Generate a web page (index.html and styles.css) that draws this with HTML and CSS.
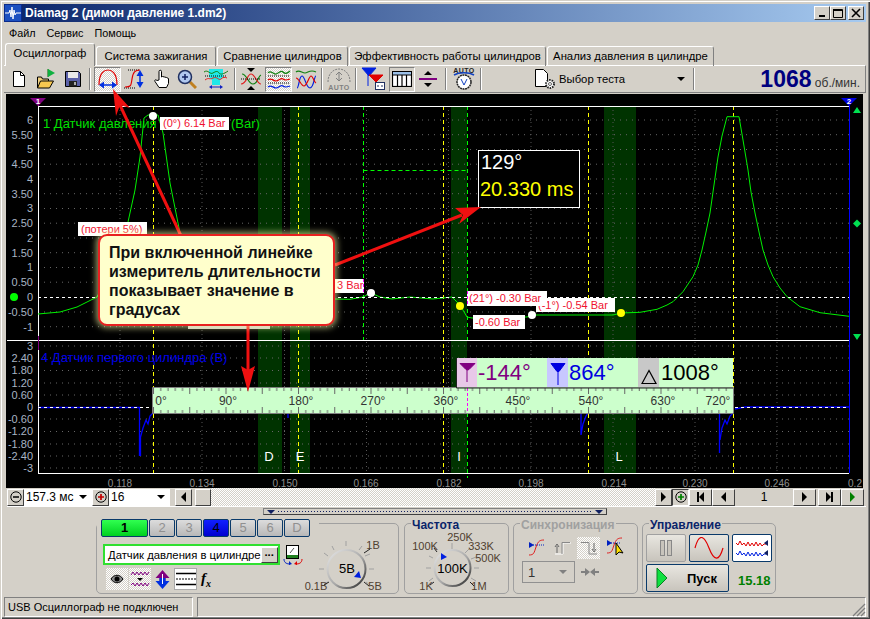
FILE: index.html
```html
<!DOCTYPE html>
<html lang="en">
<head>
    <meta charset="UTF-8">
    <meta name="viewport" content="width=device-width, initial-scale=1.0">
    <title>Diamag 2</title>
    <link rel="stylesheet" href="styles.css">
</head>
<body>
<div class="window">
    <div class="titlebar">
        <svg class="app-icon" width="18" height="18" viewBox="0 0 18 18"><rect width="18" height="18" fill="#0a2a8a"/><rect x="1" y="1" width="16" height="16" fill="#1c50c0"/><path d="M1 9h4l1-3 1 7 1-10 1 12 1-9 1 5 1-2h5" fill="none" stroke="#fff"/></svg>
        <span class="title-text">Diamag 2 (димон давление 1.dm2)</span>
        <div class="win-buttons">
            <div class="win-btn"><svg width="10" height="10"><rect x="2" y="7" width="6" height="2"/></svg></div>
            <div class="win-btn"><svg width="10" height="10"><path d="M0.5 1.500h9v8h-9zM0.5 1v1.500h9" fill="none" stroke="#000"/></svg></div>
            <div class="win-btn win-close"><svg width="10" height="10"><path d="M1 1l8 8M9 1l-8 8" stroke="#000" stroke-width="1.600"/></svg></div>
        </div>
    </div>

    <div class="menu">
        <span>Файл</span>
        <span>Сервис</span>
        <span>Помощь</span>
    </div>

    <div class="tabs">
        <div class="tab tab-active">Осциллограф</div>
        <div class="tab tab-w120">Система зажигания</div>
        <div class="tab tab-w131">Сравнение цилиндров</div>
        <div class="tab tab-w197">Эффективность работы цилиндров</div>
        <div class="tab tab-w167">Анализ давления в цилиндре</div>
    </div>

    <div class="toolbar">
        <div class="tool"><svg width="16" height="18" viewBox="0 0 16 18"><path d="M2.500 1.500h7l4 4v11h-11z" fill="#fff" stroke="#000"/><path d="M9.500 1.500v4h4" fill="none" stroke="#000"/></svg></div>
        <div class="tool"><svg width="20" height="22" viewBox="0 0 20 22"><path d="M12 1v8" stroke="#060"/><path d="M12 1l7 4-7 4z" fill="#10b040"/><path d="M1.500 20V9h4l1 2h6v2" fill="#f0d080" stroke="#000"/><path d="M1.500 20l3-7h13l-4 7z" fill="#f8c850" stroke="#000"/></svg></div>
        <div class="tool"><svg width="16" height="16" viewBox="0 0 16 16"><path d="M.5 .5h13l2 2v13H.5z" fill="#5a60a8" stroke="#000"/><rect x="3" y="1" width="10" height="6" fill="#e8e8e8"/><rect x="4" y="10" width="8" height="5.500" fill="#222"/><rect x="9" y="11" width="2" height="3" fill="#aaa"/></svg></div>
        <div class="sep"></div>
        <div class="tool tool-on"><svg width="22" height="22" viewBox="0 0 22 22"><path d="M2 17C2 4 8 2 11 2s9 2 9 15" fill="none" stroke="#e00000" stroke-width="1.200"/><path d="M3 17h16" stroke="#0030e0" stroke-width="1.500"/><path d="M2 17l5-3.500v7zM20 17l-5-3.500v7z" fill="#0030e0"/></svg></div>
        <div class="tool"><svg width="22" height="22" viewBox="0 0 22 22"><path d="M4 2h12M0 20h11" stroke="#000" stroke-dasharray="1 1"/><path d="M1 19c6 0 6-1 7-8s3-9 8-9" fill="none" stroke="#e00000" stroke-width="1.200"/><path d="M16 5v12" stroke="#0030e0" stroke-width="1.500"/><path d="M16 2l3.500 6h-7zM16 20l3.500-6h-7z" fill="#0030e0"/></svg></div>
        <div class="tool"><svg width="18" height="20" viewBox="0 0 18 20"><path d="M6 11V2.500a1.200 1.200 0 0 1 2.500 0V8l1-.5 2 .5 2 .5 2 1v5l-2 4H6l-4-6c-1-2 1-2 2-1z" fill="#fff" stroke="#000"/></svg></div>
        <div class="tool tool-w24"><svg width="20" height="20" viewBox="0 0 20 20"><path d="M13 13l6 6" stroke="#c08020" stroke-width="3"/><circle cx="8" cy="8" r="6.500" fill="#b0c8f0" stroke="#203060" stroke-width="1.500"/><path d="M5 8h6M8 5v6" stroke="#102060" stroke-width="1.500"/></svg></div>
        <div class="tool tool-w34"><svg width="26" height="22" viewBox="0 0 26 22"><path d="M6 1h14v8l-3 3v5H9v-5l-3-3z" fill="#20e8e8"/><path d="M1 4c4-3 6 3 9 1s5-2 6 0 5 1 9-2" fill="none" stroke="#108010"/><path d="M2 8h22" stroke="#000" stroke-dasharray="1 1"/><path d="M2 12c4-3 4 0 8-2s6 3 8 1 4-2 6-1" fill="none" stroke="#e02020"/><path d="M8 19h10" stroke="#1020c0"/><path d="M6 19l3-2v4zM20 19l-3-2v4z" fill="#1020c0"/></svg></div>
        <div class="sep sep-tight"></div>
        <div class="tool tool-w28"><svg width="24" height="24" viewBox="0 0 24 24"><path d="M3 7c5 0 6 10 11 10s5-8 8-9" fill="none" stroke="#108010" stroke-width="1.200"/><path d="M2 17c6 0 6-10 10-10s6 10 10 10" fill="none" stroke="#e02020" stroke-width="1.200"/><path d="M2 12h20" stroke="#000" stroke-dasharray="1 1"/><path d="M8 1h8l-4 4zM8 23h8l-4-4z"/></svg></div>
        <div class="tool tool-on"><svg width="24" height="22" viewBox="0 0 24 22"><path d="M1 5c3-4 5 2 8 1s5-4 7-2 4 2 7-1" fill="none" stroke="#108010" stroke-width="1.200"/><path d="M1 8h22M1 15h22" stroke="#000" stroke-dasharray="1 1"/><path d="M1 12c3-3 5 1 8 1s5-4 7-2 4 1 7 0" fill="none" stroke="#e00000" stroke-width="1.200"/><path d="M1 19c3-3 5 1 8 1s5-4 7-2 4 1 7 0" fill="none" stroke="#0020e0" stroke-width="1.200"/></svg></div>
        <div class="tool tool-w28"><svg width="22" height="22" viewBox="0 0 22 22"><path d="M1 4c3-3 6 1 9 1s5-4 11-1" fill="none" stroke="#108010" stroke-width="1.200"/><path d="M2 20c2 0 2-12 5-12s4 12 8 12 4-12 6-12" fill="none" stroke="#0020e0" stroke-width="1.200"/><path d="M1 10c3 0 5 8 8 8s5-10 7-10 3 6 5 7" fill="none" stroke="#e00000" stroke-width="1.200"/></svg></div>
        <div class="sep sep-a"></div>
        <div class="tool"><svg width="24" height="24" viewBox="0 0 24 24"><path d="M1 15C1 6 7 2 12 2s11 4 11 13" fill="none" stroke="#808080" stroke-dasharray="2 1"/><path d="M12 5v9M9 8l3-3 3 3M9 11l3 3 3-3" fill="none" stroke="#808080"/><text x="12" y="23" class="auto-text auto-gray">AUTO</text></svg></div>
        <div class="sep"></div>
        <div class="tool tool-filter"><svg width="24" height="24" viewBox="0 0 24 24"><path d="M1 1h14l-7 8zM7 4v15" fill="#0020e0" stroke="#0020e0"/><path d="M8 8h14l-7 7zM15 12v8" fill="#e00000" stroke="#e00000"/><rect x="14.500" y="15.500" width="9" height="7" fill="#fff" stroke="#203060"/><path d="M16 19h2M20 19h2" stroke="#203060"/></svg></div>
        <div class="tool tool-w26 tool-pressed"><svg width="20" height="16" viewBox="0 0 20 16"><rect x=".5" y=".5" width="19" height="15" fill="#fff" stroke="#000" stroke-width="1.200"/><rect x="1" y="1" width="18" height="3" fill="#9cc0e8"/><path d="M0 4h20M5.500 4v12M10 4v12M14.500 4v12" stroke="#000" stroke-width="1.200"/></svg></div>
        <div class="tool tool-w25"><svg width="18" height="20" viewBox="0 0 18 20"><path d="M0 10h18" stroke="#800080" stroke-width="2"/><path d="M5 6l4-4 4 4zM5 14l4 4 4-4z"/></svg></div>
        <div class="sep sep-wide"></div>
        <div class="tool tool-w29"><svg width="24" height="26" viewBox="0 0 24 26"><text x="12" y="6.500" class="auto-text">AUTO</text><path d="M2 9c5-3 15-3 20 0" fill="none" stroke="#1040c0" stroke-width="1.500"/><circle cx="12" cy="16" r="7" fill="#fff" stroke="#222" stroke-width="1.500" stroke-dasharray="2 .6"/><path d="M9 13l3 6 3-6" fill="none" stroke="#1040c0"/></svg></div>
        <div class="sep sep-b"></div>
        <div class="test-select">
            <svg width="22" height="22" viewBox="0 0 22 22"><path d="M1.500 1.500h8l4 4v13h-12z" fill="#fff" stroke="#000"/><circle cx="16" cy="16" r="4" fill="#fff" stroke="#222" stroke-width="2" stroke-dasharray="1.500 1"/><circle cx="16" cy="16" r="1.500" fill="#fff" stroke="#222" stroke-width=".7"/></svg>
            <span class="test-label">Выбор теста</span>
            <i class="arrow-down"></i>
        </div>
        <div class="sep"></div>
        <div class="rpm"><b>1068</b> <span>об./мин.</span></div>
    </div>

    <div class="plot">
        <svg class="plot-svg" width="857" height="394" viewBox="6 94 857 394">
            <!-- zones -->
            <path class="zone" d="M258 106h24v367h-24zM290 106h20v367h-20zM451 106h16v367h-16zM604 106h32v367h-32z"/>
            <!-- dotted grid -->
            <path class="grid-h" d="M38 120H849M38 134.700H849M38 149.500H849M38 164.200H849M38 179H849M38 193.700H849M38 208.500H849M38 223.200H849M38 238H849M38 252.700H849M38 267.500H849M38 282.200H849M38 312H849M38 326.700H849M38 346H849M38 358H849M38 370.500H849M38 383H849M38 395H849M38 419H849M38 431.500H849M38 444H849M38 456H849M38 468H849"/>
            <path class="grid-v" d="M120 106V473M202 106V473M284.500 106V473M366.500 106V473M448.500 106V473M531 106V473M613 106V473M695 106V473M777 106V473"/>
            <!-- cursors -->
            <path class="cursor-y" d="M153.500 106V473M298.500 106V473M443.500 106V473M588.500 106V473M733.500 106V473"/>
            <path class="cursor-g" d="M363.500 106V340M467.500 106V340M467.500 413V478M363.500 170.500H467"/>
            <!-- frame -->
            <path class="frame" d="M38 106.500H849M7 340.500H849M38 473.500H849M38.500 106V336M38.500 350V473"/>
            <path class="frame-p" d="M38.500 98V106M38.500 336V350"/>
            <path class="frame-b" d="M849.500 98V473"/>
            <!-- y labels -->
            <g class="axis">
                <text x="33" y="124">6</text><text x="33" y="138.500">5.50</text><text x="33" y="153">5</text><text x="33" y="168">4.50</text><text x="33" y="183">4</text><text x="33" y="198">3.50</text><text x="33" y="212">3</text><text x="33" y="227">2.50</text><text x="33" y="242">2</text><text x="33" y="257">1.50</text><text x="33" y="271">1</text><text x="33" y="286">0.50</text><text x="33" y="301">0</text><text x="33" y="316">-0.50</text><text x="33" y="331">-1</text>
                <text x="33" y="350">3</text><text x="33" y="362">2.40</text><text x="33" y="374">1.80</text><text x="33" y="387">1.20</text><text x="33" y="399">0.60</text><text x="33" y="411">0</text><text x="33" y="423">-0.60</text><text x="33" y="435">-1.20</text><text x="33" y="448">-1.80</text><text x="33" y="460">-2.40</text><text x="33" y="472">-3</text>
            </g>
            <g class="axis-x">
                <text x="120" y="487">0.118</text><text x="202" y="487">0.134</text><text x="285" y="487">0.150</text><text x="366" y="487">0.166</text><text x="449" y="487">0.182</text><text x="531" y="487">0.198</text><text x="614" y="487">0.214</text><text x="695" y="487">0.230</text><text x="777" y="487">0.246</text><text x="855" y="487">0.2</text>
            </g>
            <g class="zone-label"><text x="269" y="461">D</text><text x="300" y="461">E</text><text x="459" y="461">I</text><text x="619" y="461">L</text></g>
            <!-- traces -->
            <path class="trace-g" d="M38 314L60 312L77 307L97 297L112 268L128 222L135 190L140 157L144 118L148 115L158 115L163 133L170 183L180 233L200 270L230 292L270 300L335 299L350 299.300L363 297L371 293L380 297L392 299L410 297L433 299L452 297L460 305L467 317L472 318L527 317L532 315L613 315L621 313L640 312.300L657 309.300L667 305L673 301.700L683 291.700L693 276.700L698 265L702 250L706 232L710 213L714 185L718 157L722 136L727 116.700L739 116.700L743 140L748 170L751 192L755 213L759 232L763 250L768 265L773 276.700L780 288L787 296.700L800 306.700L820 312.700L849 316.300"/>
            <path class="trace-b" d="M38 407.500H139.500V456M140.500 456V437L143 428L146 420L148 424L150 416L153 413M288 414V418M581 413V435L583 424L586 416L588 413M719.500 413V453M720 440L722 428L725 420L727 424L730 416L733 413M735 409L745 407H849"/>
            <path class="zero" d="M38 297.500H849M38 407.500H152M735 407.500H849"/>
            <!-- channel titles -->
            <text class="ch-green" x="43" y="128">1 Датчик давления</text>
            <text class="ch-green" x="231" y="128">(Bar)</text>
            <text class="ch-blue" x="41" y="362">4 Датчик первого цилиндра (B)</text>
            <!-- value labels -->
            <rect class="tag" x="160" y="117" width="69" height="13"/><text class="tag-text" x="163" y="127">(0°) 6.14 Bar</text>
            <rect class="tag" x="78" y="222" width="69" height="14"/><text class="tag-text" x="81" y="233">(потери 5%)</text>
            <rect class="tag tag-hidden" x="188" y="325" width="82" height="4"/>
            <rect class="tag" x="330" y="279" width="34" height="14"/><text class="tag-text" x="337" y="289">3 Bar</text>
            <path class="cursor-m" d="M363.500 279V293"/>
            <rect class="tag" x="536" y="298" width="79" height="14"/><text class="tag-text" x="538" y="309">(-1°) -0.54 Bar</text>
            <rect class="tag" x="467" y="291" width="80" height="15"/><text class="tag-text" x="469" y="302">(21°) -0.30 Bar</text>
            <rect class="tag" x="473" y="315" width="52" height="14"/><text class="tag-text" x="475" y="326">-0.60 Bar</text>
            <path class="cursor-m" d="M467.500 291V306"/>
            <!-- dots -->
            <circle class="dot-w" cx="153" cy="116" r="4"/>
            <circle class="dot-w" cx="371" cy="293" r="4"/>
            <circle class="dot-y" cx="460" cy="306" r="4"/>
            <circle class="dot-w" cx="532" cy="315" r="4"/>
            <circle class="dot-y" cx="621" cy="313" r="4"/>
            <circle class="dot-g" cx="14" cy="297" r="4"/>
            <!-- channel markers -->
            <path d="M30 98h16l-8 8z" fill="#800080"/><text class="marker" x="38" y="104">1</text>
            <path d="M841 98h16l-8 8z" fill="#0000e0"/><text class="marker" x="849" y="104">2</text>
            <path d="M853 113l4-6 4 6zM853 334h8l-4 6zM853 223.500l4-4 4 4-4 4z" fill="#00e050"/>
            <!-- measure box -->
            <rect class="measure" x="478.500" y="150.500" width="101" height="57"/>
            <text class="measure-w" x="481" y="169">129°</text>
            <text class="measure-y" x="480" y="196">20.330 ms</text>
            <!-- degree ruler -->
            <defs>
                <pattern id="ruler-ticks" x="153" y="388" width="36.250" height="25" patternUnits="userSpaceOnUse">
                    <path d="M.5 0v6M7.750 0v3M15 0v3M22.250 0v3M29.500 0v3M.5 25v-6M7.750 25v-3M15 25v-3M22.250 25v-3M29.500 25v-3" stroke="#666"/>
                </pattern>
            </defs>
            <rect class="ruler" x="153" y="388" width="580" height="25"/>
            <rect x="153" y="388" width="580" height="25" fill="url(#ruler-ticks)"/>
            <path class="ruler-edge" d="M152.500 413.500V387.500H733.500V413.500H152.500"/>
            <g class="ruler-text"><text x="161" y="405">0°</text><text x="228" y="405">90°</text><text x="301" y="405">180°</text><text x="373" y="405">270°</text><text x="446" y="405">360°</text><text x="518" y="405">450°</text><text x="591" y="405">540°</text><text x="663" y="405">630°</text><text x="718" y="405">720°</text></g>
            <path class="cursor-m" d="M467.500 388V413"/>
            <!-- readout above ruler -->
            <rect x="457" y="358" width="276" height="29.500" fill="#ccffcc"/>
            <path d="M456.500 358V388H733" fill="none" stroke="#222"/>
            <rect x="457" y="358" width="20" height="29" fill="#e8c8e8"/>
            <rect x="547" y="358" width="21" height="29" fill="#c8c8ff"/>
            <rect x="638" y="358" width="21" height="29" fill="#c8c8c8"/>
            <path d="M460 363.500h15l-6 6-1.500 .5-1.500-.5z M467 369v13" fill="#800080" stroke="#800080"/>
            <path d="M551 363.500h14l-6 8h-2z M558 370v15" fill="#0000e0" stroke="#0000e0"/>
            <path d="M642 383.500l7-13 7 13z" fill="none" stroke="#000" stroke-width="1.200"/>
            <text class="read read-p" x="478" y="380">-144°</text>
            <text class="read read-b" x="569" y="380">864°</text>
            <text class="read" x="661" y="380">1008°</text>
        </svg>
    </div>

    <div class="scroll-row">
        <div class="sbtn"><svg width="12" height="12"><circle cx="6" cy="6" r="5.200" fill="#d4d0c8" stroke="#000"/><path d="M3 6h6" stroke="#000" stroke-width="1.500"/></svg></div>
        <div class="combo combo-a"><span>157.3 мс</span><i class="arrow-down"></i></div>
        <div class="sbtn"><svg width="12" height="12"><circle cx="6" cy="6" r="5.200" fill="#d4d0c8" stroke="#000"/><path d="M3 6h6M6 3v6" stroke="#c00000" stroke-width="1.700"/></svg></div>
        <div class="combo combo-b"><span>16</span><i class="arrow-down"></i></div>
        <div class="sbtn sbtn-gap"><i class="arrow-left"></i></div>
        <div class="thumb"></div>
        <div class="track"></div>
        <div class="sbtn"><i class="arrow-right"></i></div>
        <div class="sbtn sbtn-on"><svg width="12" height="12"><circle cx="6" cy="6" r="5.200" fill="#d4d0c8" stroke="#000"/><path d="M3 6h6M6 3v6" stroke="#008000" stroke-width="1.700"/></svg></div>
        <div class="sbtn sbtn-nav"><i class="bar"></i><i class="arrow-left"></i></div>
        <div class="sbtn sbtn-nav"><i class="arrow-left"></i></div>
        <div class="page-num">1</div>
        <div class="sbtn sbtn-nav"><i class="arrow-right"></i></div>
        <div class="sbtn sbtn-nav sbtn-next"><i class="arrow-right"></i><i class="bar"></i></div>
        <div class="sbtn sbtn-nav"><i class="arrow-right arrow-green"></i></div>
    </div>

    <div class="splitter"><i class="arrow-down arrow-navy"></i><div class="split-dots"></div><i class="arrow-down arrow-navy"></i></div>

    <div class="panel">
        <div class="group group-channel">
            <div class="ch-buttons">
                <div class="ch-btn ch-green-btn">1</div>
                <div class="ch-btn">2</div>
                <div class="ch-btn">3</div>
                <div class="ch-btn ch-blue-btn">4</div>
                <div class="ch-btn">5</div>
                <div class="ch-btn">6</div>
                <div class="ch-btn">D</div>
            </div>
            <div class="ch-body">
                <div class="ch-left">
                    <div class="sensor-row">
                        <div class="sensor-input"><span>Датчик давления в цилиндре</span><div class="dots-btn">...</div></div>
                        <svg width="20" height="20" viewBox="0 0 20 20"><rect x="3.500" y=".5" width="12" height="13" fill="#fff" stroke="#000"/><path d="M7 8l4-5" stroke="#555"/><rect x="4" y="10" width="11" height="3" fill="#208020"/><path d="M1 14c0 4 3 5 6 5" fill="none" stroke="#0020c0"/><path d="M6 16l3 3-3 1z" fill="#0020c0"/><path d="M19 14c0 4-3 5-6 5" fill="none" stroke="#e00000"/><path d="M14 16l-3 3 3 1z" fill="#e00000"/></svg>
                    </div>
                    <div class="ch-tools">
                        <div class="ch-tool checker"><svg width="14" height="10" viewBox="0 0 14 10"><path d="M1 5c3-5 9-5 12 0-3 5-9 5-12 0z" fill="#888" stroke="#000"/><circle cx="7" cy="5" r="2.500"/></svg></div>
                        <div class="ch-tool checker"><svg width="20" height="20" viewBox="0 0 20 20"><path d="M1 6l2-3 2 3 2-3 2 3 2-3 2 3 2-3 2 3 2-3M1 16l2-2 2 3 2-3 2 3 2-3 2 3 2-3 2 3 2-3" fill="none" stroke="#800080"/><path d="M7 9h6l-3 3z"/></svg></div>
                        <div class="ch-icon"><svg width="17" height="21" viewBox="0 0 17 21"><path d="M8.500 1l7 8h-4v3h-6V9h-4z" fill="#800080"/><path d="M8.500 20l7-8h-4V9h-6v3h-4z" fill="#0030e0"/><path d="M8.500 5v10" stroke="#fff"/></svg></div>
                        <div class="ch-tool ch-lines"><svg width="20" height="14" viewBox="0 0 20 14"><path d="M0 1.500h20M0 12.500h20" stroke="#000" stroke-width="1.300"/><path d="M0 7h20" stroke="#000" stroke-dasharray="2 1"/></svg></div>
                        <span class="fx"><i>f<sub>x</sub></i></span>
                    </div>
                </div>
                <svg class="knob" width="94" height="56" viewBox="305 538 94 56">
                    <defs>
                        <linearGradient id="ring" x1="0" y1="0" x2="1" y2="1"><stop offset="0" stop-color="#e8e8e8"/><stop offset=".55" stop-color="#a8a8a8"/><stop offset="1" stop-color="#222"/></linearGradient>
                    </defs>
                    <path class="knob-tick" d="M329 557l-4-3M325 570h-5M329 583l-4 2M335 551l-2-4M347 547v-5M360 551l3-4M370 570h5M366 557l5-2M367 583l4 3"/>
                    <path class="knob-lead" d="M330 583l-5 3M365 554l6-4M365 583l5 4"/>
                    <circle cx="347.500" cy="570" r="19" fill="#d4d0c8" stroke="url(#ring)" stroke-width="2"/>
                    <path d="M355 578l5-6 2 7z" fill="#0020e0"/>
                    <text class="knob-center" x="348" y="574">5B</text>
                    <text class="knob-text" x="374" y="550">1B</text>
                    <text class="knob-text" x="317" y="591">0.1B</text>
                    <text class="knob-text" x="376" y="591">5B</text>
                </svg>
            </div>
        </div>

        <div class="group group-freq">
            <div class="group-title">Частота</div>
            <svg class="knob" width="103" height="69" viewBox="404 524 103 69">
                <path class="knob-tick" d="M430 568h-5M432 578l-4 3M432 558l-4-2M451 549v-6M464 553l4-4M473 568h5M470 559l5-2M470 578l5 3"/>
                <path class="knob-lead" d="M436 552l-3-4M433 582l-4 3M469 582l4 4"/>
                <circle cx="451.500" cy="568" r="18" fill="#d4d0c8" stroke="url(#ring)" stroke-width="2"/>
                <path d="M440 553l6 4-6 3z" fill="#0020e0"/>
                <text class="knob-center" x="451.500" y="573">100K</text>
                <text class="knob-text" x="459" y="541">250K</text>
                <text class="knob-text" x="424" y="550">100K</text>
                <text class="knob-text" x="480" y="550">333K</text>
                <text class="knob-text" x="487" y="562">500K</text>
                <text class="knob-text" x="425" y="590">1K</text>
                <text class="knob-text" x="478" y="590">1M</text>
            </svg>
        </div>

        <div class="group group-sync">
            <div class="group-title group-title-off">Синхронизация</div>
            <div class="sync-icons">
                <div class="sync-icon"><svg width="18" height="18" viewBox="0 0 18 18"><path d="M1 16c5 0 5-2 7-8s4-7 8-7" fill="none" stroke="#e02020"/><path d="M3 6h13" stroke="#0020c0" stroke-dasharray="1 1"/><path d="M1 3l5 3-5 3z" fill="#0020c0"/></svg></div>
                <div class="sync-icon"><svg width="18" height="14" viewBox="0 0 18 14"><path d="M9 13V2h8M1 13h8" fill="none" stroke="#fff"/><path d="M8 13V1.500h8" fill="none" stroke="#888"/><path d="M3 12V5M1 6l2-3 2 3" fill="none" stroke="#666"/></svg></div>
                <div class="sync-icon checker"><svg width="18" height="14" viewBox="0 0 18 14"><path d="M1 1.500h8V13h8" fill="none" stroke="#888"/><path d="M14 2v7M12 8l2 3 2-3" fill="none" stroke="#666"/></svg></div>
                <div class="sync-icon"><svg width="18" height="22" viewBox="0 0 18 22"><path d="M1 16c5 0 5-2 7-8s4-7 8-7" fill="none" stroke="#e02020"/><path d="M3 6h11" stroke="#0020c0" stroke-dasharray="1 1"/><path d="M1 3l5 3-5 3z" fill="#0020c0"/><path d="M10 6v12l3-3 4 1z" fill="#ffe000" stroke="#000"/></svg></div>
            </div>
            <div class="sync-row">
                <div class="sync-combo"><span>1</span><i class="arrow-down arrow-gray"></i></div>
                <svg width="20" height="10" viewBox="0 0 20 10"><path d="M1 5h5M14 5h5" stroke="#808080" stroke-width="2"/><path d="M10 5L5 1v8zM10 5l5-4v8z" fill="#808080"/></svg>
            </div>
        </div>

        <div class="group group-ctrl">
            <div class="group-title">Управление</div>
            <div class="ctrl-row ctrl-top">
                <div class="ctrl-btn ctrl-off"><svg width="14" height="16"><rect x="1.500" y=".5" width="4" height="15" fill="#c8c4bc" stroke="#888"/><rect x="8.500" y=".5" width="4" height="15" fill="#c8c4bc" stroke="#888"/></svg></div>
                <div class="ctrl-btn"><svg width="30" height="22" viewBox="0 0 30 22"><path d="M1 11C5 -4 10 -2 15 11s10 14 14 0" fill="none" stroke="#e00000" stroke-width="1.200"/></svg></div>
                <div class="ctrl-btn ctrl-white"><svg width="34" height="22" viewBox="0 0 34 22"><path d="M1 6l2 2 2-4 2 4 2-2 2 3 2-4 2 4 2-3 2 3 2-4 2 4 2-3 2 3 2-2 2 0" fill="none" stroke="#e00000"/><path d="M1 16l2 2 2-4 2 4 2-2 2 3 2-4 2 4 2-3 2 3 2-4 2 4 2-3 2 3 2-2 2 0" fill="none" stroke="#0020e0"/><path d="M29 6l4-3v6zM29 16l4-3v6z" fill="#102060"/></svg></div>
            </div>
            <div class="ctrl-row">
                <div class="ctrl-btn start-btn"><svg width="12" height="20"><path d="M1 0l10 10-10 10z" fill="#10e040" stroke="#088020"/></svg><b>Пуск</b></div>
                <div class="timer">15.18</div>
            </div>
        </div>
    </div>

    <div class="statusbar">
        <div class="status-cell status-main">USB Осциллограф не подключен</div>
        <div class="status-cell status-rest"></div>
        <svg class="grip" width="14" height="14"><path d="M13 1L1 13M13 5L5 13M13 9L9 13" stroke="#808080" stroke-width="1.300"/></svg>
    </div>

    <!-- annotation on top of the window -->
    <svg class="arrows" width="870" height="619">
        <path d="M182 238L119 103M335 265L462 215M248 325V372" fill="none" stroke="#f01010" stroke-width="3"/>
        <path d="M113 89L130 108L120 105L116 116zM481 207L459 224L463 215L455 208zM248 392L241 366L248 370L255 366z" fill="#f01010"/>
    </svg>
    <div class="callout">При включенной линейке измеритель длительности показывает значение в градусах</div>
</div>
</body>
</html>
```

FILE: styles.css
```css
* {
    box-sizing: border-box;
}
body {
    margin: 0;
    font-family: "Liberation Sans", Arial, sans-serif;
    font-size: 11.3px;
    color: #000;
    background: #d4d0c8;
}
.window {
    position: relative;
    width: 870px;
    height: 619px;
    padding: 4px 4px 0;
    overflow: hidden;
    background: #d4d0c8;
    box-shadow: inset 1px 1px 0 #d4d0c8, inset 2px 2px 0 #fff, inset -1px -1px 0 #404040, inset -2px -2px 0 #808080;
}

/* title bar */
.titlebar {
    display: flex;
    align-items: center;
    height: 18px;
    padding-right: 2px;
    color: #fff;
    background: linear-gradient(to right, #0a246a, #a6caf0);
}
.app-icon {
    margin-right: 3px;
}
.title-text {
    font-size: 12px;
    font-weight: bold;
}
.win-buttons {
    display: flex;
    margin-left: auto;
}
.win-btn {
    display: flex;
    align-items: center;
    justify-content: center;
    width: 16px;
    height: 14px;
    background: #d4d0c8;
    border: 1px solid;
    border-color: #fff #404040 #404040 #fff;
}
.win-close {
    margin-left: 2px;
}

/* menu */
.menu {
    display: flex;
    gap: 11px;
    align-items: center;
    height: 21px;
    padding-left: 5px;
    font-size: 10.8px;
}

/* tabs */
.tabs {
    display: flex;
    align-items: flex-end;
    height: 23px;
    padding-left: 1px;
    gap: 1px;
}
.tab {
    height: 20px;
    padding-top: 3px;
    text-align: center;
    white-space: nowrap;
    border: 1px solid #fff;
    border-right-color: #808080;
    border-bottom: none;
    border-radius: 3px 3px 0 0;
}
.tab-active {
    position: relative;
    z-index: 1;
    width: 90px;
    height: 23px;
    padding-top: 3px;
    background: #d4d0c8;
}
.tab-w120 { width: 120px; }
.tab-w131 { width: 131px; }
.tab-w197 { width: 197px; }
.tab-w167 { width: 167px; }

/* toolbar */
.toolbar {
    display: flex;
    align-items: center;
    height: 28px;
    margin-top: -1px;
    padding-left: 1px;
    border-top: 1px solid #fff;
    border-bottom: 1px solid #808080;
    border-right: 1px solid #808080;
}
.tool {
    display: flex;
    flex: none;
    align-items: center;
    justify-content: center;
    width: 27px;
    height: 25px;
}
.tool-w24 { width: 24px; }
.tool-w25 { width: 25px; }
.tool-w26 { width: 26px; }
.tool-w28 { width: 28px; }
.tool-w29 { width: 29px; }
.tool-w34 { width: 34px; }
.tool-filter {
    width: 25px;
    margin-right: 4px;
}
.tool-on,
.checker {
    background: repeating-conic-gradient(#fff 0 25%, #d4d0c8 0 50%) 0 0 / 2px 2px;
}
.tool-on {
    border: 1px solid;
    border-color: #808080 #fff #fff #808080;
}
.tool-pressed {
    border: 1px solid;
    border-color: #808080 #fff #fff #808080;
}
.sep {
    flex: none;
    width: 2px;
    height: 22px;
    margin: 0 3px;
    border-left: 1px solid #808080;
    border-right: 1px solid #fff;
}
.sep-tight {
    margin: 0 1px;
}
.sep-a {
    margin: 0 2px 0 1px;
}
.sep-wide {
    margin: 0 2px 0 5px;
}
.sep-b {
    margin: 0 2px;
}
.auto-text {
    font-size: 7px;
    font-weight: bold;
    text-anchor: middle;
    fill: #222;
    letter-spacing: .4px;
}
.auto-gray {
    fill: #808080;
}
.test-select {
    display: flex;
    flex: none;
    align-items: center;
    width: 206px;
    padding-left: 50px;
    white-space: nowrap;
}
.test-label {
    margin-left: 3px;
}
.test-select .arrow-down {
    margin-left: 52px;
}
.rpm {
    margin-left: auto;
    padding-right: 5px;
    white-space: nowrap;
    color: #333;
    font-size: 12px;
}
.rpm b {
    color: #00007f;
    font-size: 23px;
}

/* css triangles */
.arrow-down,
.arrow-left,
.arrow-right {
    display: inline-block;
    width: 0;
    height: 0;
    flex: none;
}
.arrow-down {
    border: 4px solid transparent;
    border-top-color: #000;
    border-bottom: none;
}
.arrow-left {
    border: 5px solid transparent;
    border-right-color: #000;
    border-left: none;
}
.arrow-right {
    border: 5px solid transparent;
    border-left-color: #000;
    border-right: none;
}
.arrow-green { border-left-color: #008000; }
.arrow-navy { border-top-color: #102060; }
.arrow-gray { border-top-color: #808080; }
.bar {
    display: inline-block;
    width: 2px;
    height: 10px;
    background: #000;
}

/* plot */
.plot {
    height: 394px;
    margin: 1px 3px 0 2px;
    background: #000;
    overflow: hidden;
}
.plot-svg {
    display: block;
    font-family: "Liberation Sans", Arial, sans-serif;
}
.zone { fill: #003300; }
.grid-h { stroke: #666; stroke-dasharray: 1 5; fill: none; }
.grid-v { stroke: #555; stroke-dasharray: 1 3; fill: none; }
.cursor-y { stroke: #ffff00; stroke-dasharray: 4 3; fill: none; }
.cursor-g { stroke: #00ff00; stroke-dasharray: 4 3; fill: none; }
.cursor-m { stroke: #ff00ff; stroke-dasharray: 3 2; fill: none; }
.frame { stroke: #fff; fill: none; }
.frame-p { stroke: #800080; fill: none; }
.frame-b { stroke: #0000ff; fill: none; }
.zero { stroke: #fff; stroke-dasharray: 3 3; fill: none; }
.axis text {
    fill: #a8b4c4;
    font-size: 11px;
    text-anchor: end;
}
.axis-x text {
    fill: #909090;
    font-size: 10px;
    text-anchor: middle;
}
.zone-label text {
    fill: #fff;
    font-size: 13px;
    text-anchor: middle;
}
.trace-g { stroke: #00f000; fill: none; }
.trace-b { stroke: #0000ff; fill: none; stroke-width: 1.300; }
.ch-green { fill: #00e000; font-size: 13px; }
.ch-blue { fill: #0000e8; font-size: 13px; }
.tag { fill: #fff; }
.tag-hidden { fill: #ccc; }
.tag-text { fill: #f01030; font-size: 11px; }
.dot-w { fill: #fff; }
.dot-y { fill: #ffff00; }
.dot-g { fill: #00ff00; }
.marker {
    fill: #fff;
    font-size: 8px;
    font-weight: bold;
    text-anchor: middle;
}
.measure { fill: #000; stroke: #fff; }
.measure-w { fill: #fff; font-size: 20px; }
.measure-y { fill: #ffff00; font-size: 20px; }
.ruler { fill: #ccffcc; }
.ruler-edge { stroke: #808080; fill: none; }
.ruler-text text {
    fill: #333;
    font-size: 12px;
    text-anchor: middle;
}
.read { font-size: 22px; fill: #000; }
.read-p { fill: #800080; }
.read-b { fill: #0000e0; }

/* scroll row */
.scroll-row {
    display: flex;
    align-items: center;
    height: 19px;
    margin-left: 3px;
    padding-right: 2px;
    border-bottom: 1px solid #fff;
}
.sbtn {
    display: flex;
    flex: none;
    align-items: center;
    justify-content: center;
    width: 17px;
    height: 17px;
    background: #d4d0c8;
    border: 1px solid;
    border-color: #fff #404040 #404040 #fff;
}
.sbtn-gap {
    margin-left: 5px;
}
.sbtn-on {
    border-color: #404040 #fff #fff #404040;
}
.sbtn-nav {
    width: 23px;
}
.sbtn-next {
    margin-left: 2px;
}
.combo {
    display: flex;
    flex: none;
    align-items: center;
    justify-content: space-between;
    height: 17px;
    padding: 0 5px 0 2px;
    font-size: 12px;
    background: #fff;
}
.combo-a { width: 68px; }
.combo-b { width: 61px; }
.thumb {
    flex: none;
    width: 16px;
    height: 17px;
    margin-left: 3px;
    background: #d4d0c8;
    border: 1px solid;
    border-color: #fff #404040 #404040 #fff;
}
.track {
    flex: 1;
    height: 18px;
    background: repeating-conic-gradient(#fff 0 25%, #d4d0c8 0 50%) 0 0 / 2px 2px;
}
.page-num {
    flex: none;
    width: 58px;
    text-align: center;
    font-size: 12px;
}

/* splitter */
.splitter {
    display: flex;
    align-items: center;
    gap: 3px;
    width: 344px;
    height: 7px;
    margin: 1px 0 0 259px;
    padding: 0 3px;
    border: 1px solid;
    border-color: #808080 #404040 #404040 #808080;
}
.split-dots {
    flex: 1;
    height: 1px;
    background: repeating-linear-gradient(to right, #102060 0 1px, transparent 1px 3px);
}

/* panels */
.panel {
    display: flex;
    gap: 4px;
    height: 81px;
    padding: 8px 0 0 92px;
}
.group {
    position: relative;
    flex: none;
    height: 71px;
    border: 1px solid #a0a0a0;
    border-radius: 5px;
}
.group-channel { width: 303px; margin-right: 1px; }
.group-freq { width: 105px; }
.group-sync { width: 125px; }
.group-ctrl { width: 134px; }
.group-title {
    position: absolute;
    top: -6px;
    left: 6px;
    padding: 0 1px;
    font-size: 12px;
    font-weight: bold;
    color: #0a246a;
    background: #d4d0c8;
}
.group-title-off {
    color: #a0a0a0;
}
.ch-buttons {
    display: flex;
    gap: 1px;
    width: 214px;
    margin: -5px 0 0 4px;
    background: #d4d0c8;
    box-shadow: 0 0 0 4px #d4d0c8;
}
.ch-btn {
    width: 26px;
    height: 18px;
    line-height: 16px;
    text-align: center;
    font-size: 13px;
    color: #909090;
    background: linear-gradient(#dcdcdc, #b8b8b8);
    border: 1px solid #0a3a6a;
    border-radius: 2px;
}
.ch-green-btn {
    width: 47px;
    font-weight: bold;
    color: #000;
    background: linear-gradient(#30ff50, #00d020);
}
.ch-blue-btn {
    color: #000;
    background: linear-gradient(#1020ff, #0000d0);
}
.ch-body {
    display: flex;
    justify-content: space-between;
}
.ch-left {
    padding: 7px 0 0 6px;
}
.sensor-row {
    display: flex;
    align-items: center;
    gap: 3px;
}
.sensor-input {
    display: flex;
    align-items: center;
    justify-content: space-between;
    width: 177px;
    height: 21px;
    padding: 0 1px 0 3px;
    font-size: 11.3px;
    white-space: nowrap;
    background: #fff;
    border: 2px solid #30e030;
}
.dots-btn {
    flex: none;
    width: 17px;
    height: 16px;
    line-height: 8px;
    font-weight: bold;
    text-align: center;
    background: #d4d0c8;
    border: 1px solid;
    border-color: #fff #404040 #404040 #fff;
}
.ch-tools {
    display: flex;
    align-items: center;
    height: 22px;
    margin: 3px 0 0 3px;
}
.ch-tool {
    display: flex;
    align-items: center;
    justify-content: center;
    width: 22px;
    height: 22px;
    margin-right: 1px;
}
.ch-icon {
    width: 22px;
    padding-left: 2px;
    height: 21px;
}
.ch-lines {
    width: 23px;
    background: #fff;
    border: 1px solid #aaa;
}
.fx {
    margin-left: 3px;
    font-family: "Liberation Serif", serif;
    font-size: 15px;
    font-weight: bold;
}
.fx sub {
    font-size: 10px;
}
.knob {
    display: block;
    flex: none;
}
.knob-tick { stroke: #a0a0a0; fill: none; }
.knob-lead { stroke: #222; fill: none; }
.knob-text {
    fill: #504030;
    font-size: 11px;
    text-anchor: middle;
}
.knob-center {
    fill: #000;
    font-size: 13px;
    text-anchor: middle;
}
.sync-icons {
    display: flex;
    gap: 3px;
    padding: 13px 0 0 11px;
}
.sync-icon {
    display: flex;
    align-items: center;
    justify-content: center;
    width: 23px;
    height: 22px;
}
.sync-row {
    display: flex;
    align-items: center;
    gap: 5px;
    margin: 2px 0 0 8px;
}
.sync-combo {
    display: flex;
    align-items: center;
    justify-content: space-between;
    width: 53px;
    height: 22px;
    padding: 0 7px 0 5px;
    color: #333;
    font-size: 13px;
    border: 1px solid #909090;
}
.ctrl-row {
    display: flex;
    gap: 3px;
    margin: 2px 0 0 3px;
}
.ctrl-top {
    margin-top: 10px;
}
.ctrl-btn {
    display: flex;
    align-items: center;
    justify-content: center;
    width: 40px;
    height: 28px;
    background: linear-gradient(#e8e6e0, #c8c4bc);
    border: 1px solid #0a3a6a;
    border-radius: 2px;
}
.ctrl-off {
    border-color: #a0a0a0;
}
.ctrl-white {
    background: #fff;
}
.start-btn {
    justify-content: flex-start;
    gap: 19px;
    width: 83px;
    padding-left: 9px;
    font-size: 13px;
}
.timer {
    margin: 9px 0 0 6px;
    font-size: 13px;
    font-weight: bold;
    color: #008000;
}

/* status bar */
.statusbar {
    display: flex;
    gap: 4px;
    height: 20px;
    margin-top: 1px;
    position: relative;
}
.status-cell {
    border: 1px solid;
    border-color: #808080 #fff #fff #808080;
    line-height: 18px;
    padding-left: 3px;
    font-size: 11px;
    white-space: nowrap;
}
.status-main { width: 189px; }
.status-rest { flex: 1; }
.grip {
    position: absolute;
    right: 0;
    bottom: 0;
}

/* annotation */
.arrows {
    position: absolute;
    top: 0;
    left: 0;
    pointer-events: none;
}
.callout {
    position: absolute;
    top: 234px;
    left: 98px;
    width: 237px;
    height: 92px;
    padding: 7px 3px 7px 9px;
    font-size: 16px;
    font-weight: bold;
    line-height: 19px;
    color: #111;
    background: #ffffcc;
    border: 2px solid #e82020;
    border-radius: 9px;
    box-shadow: 0 0 6px 2px rgba(255, 255, 170, .6);
}
```
